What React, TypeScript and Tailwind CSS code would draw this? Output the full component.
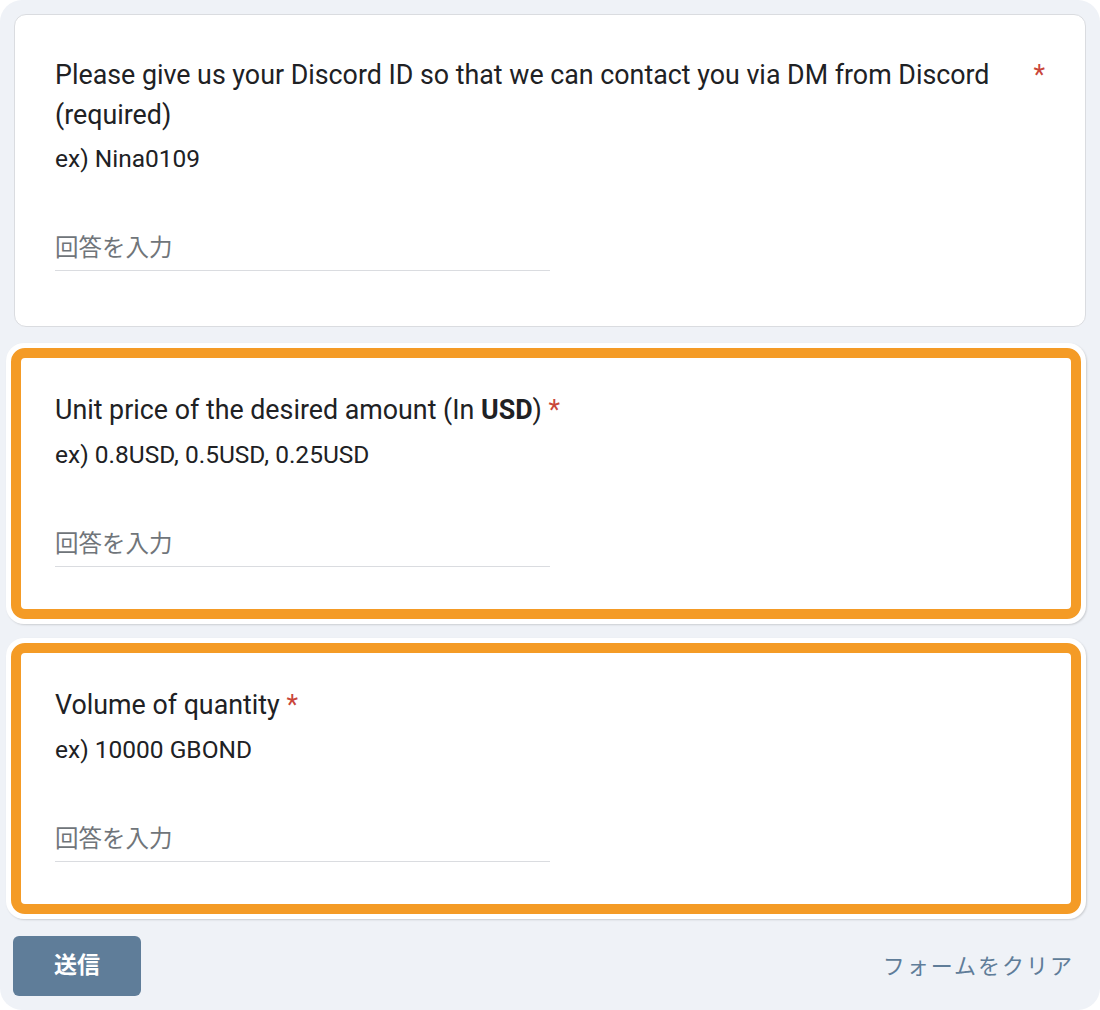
const latin = "font-['Roboto','Noto_Sans_CJK_JP',sans-serif]";

function AnswerInput() {
  return (
    <div className="mt-[59px] w-[495px] border-b border-[#dadce0] pb-[7px] text-[23.5px] leading-[30px] text-[#70757a]">
      回答を入力
    </div>
  );
}

function Highlighted({ children }: { children: React.ReactNode }) {
  return (
    <div className="ml-[6px] w-[1080px] rounded-[18px] bg-white p-[5px] shadow-[1px_1px_2px_rgba(0,0,0,0.15)]">
      <div className="rounded-[14px] border-[10px] border-[#f49b26] bg-white px-[34px] pt-[32px] pb-[42px]">
        {children}
      </div>
    </div>
  );
}

export default function App() {
  return (
    <div className={`h-[1010px] w-[1100px] bg-white ${latin}`}>
      <div className="flex h-full flex-col rounded-[22px] bg-[#eff2f7] pt-[14px]">
        {/* Discord ID */}
        <div className="ml-[14px] w-[1072px] rounded-[12px] border border-[#dadce0] bg-white px-[40px] pt-[40px] pb-[55px]">
          <div className="flex text-[26.8px] leading-[40px] text-[#202124]">
            <div className="w-[950px]">
              Please give us your Discord ID so that we can contact you via DM from Discord (required)
            </div>
            <span className="ml-auto text-[#c9463a]">*</span>
          </div>
          <p className="mt-[9px] text-[24.5px] leading-[30px] text-[#202124]">ex) Nina0109</p>
          <AnswerInput />
        </div>

        <div className="mt-[16px]">
          <Highlighted>
            <div className="text-[26.8px] leading-[40px] text-[#202124]">
              Unit price of the desired amount (In <b className="font-bold">USD</b>){" "}
              <span className="text-[#c9463a]">*</span>
            </div>
            <p className="mt-[10px] text-[24.5px] leading-[30px] text-[#202124]">
              ex) 0.8USD, 0.5USD, 0.25USD
            </p>
            <AnswerInput />
          </Highlighted>
        </div>

        <div className="mt-[14px]">
          <Highlighted>
            <div className="text-[26.8px] leading-[40px] text-[#202124]">
              Volume of quantity <span className="text-[#c9463a]">*</span>
            </div>
            <p className="mt-[10px] text-[24.5px] leading-[30px] text-[#202124]">ex) 10000 GBOND</p>
            <AnswerInput />
          </Highlighted>
        </div>

        {/* Actions */}
        <div className="mt-[17px] flex items-center justify-between pr-[26px] pl-[13px]">
          <button className="h-[60px] w-[128px] rounded-[6px] bg-[#5f7d99] text-[23px] font-semibold text-white">
            送信
          </button>
          <button className="text-[22px] tracking-[2px] text-[#5f7d99]">フォームをクリア</button>
        </div>
      </div>
    </div>
  );
}
